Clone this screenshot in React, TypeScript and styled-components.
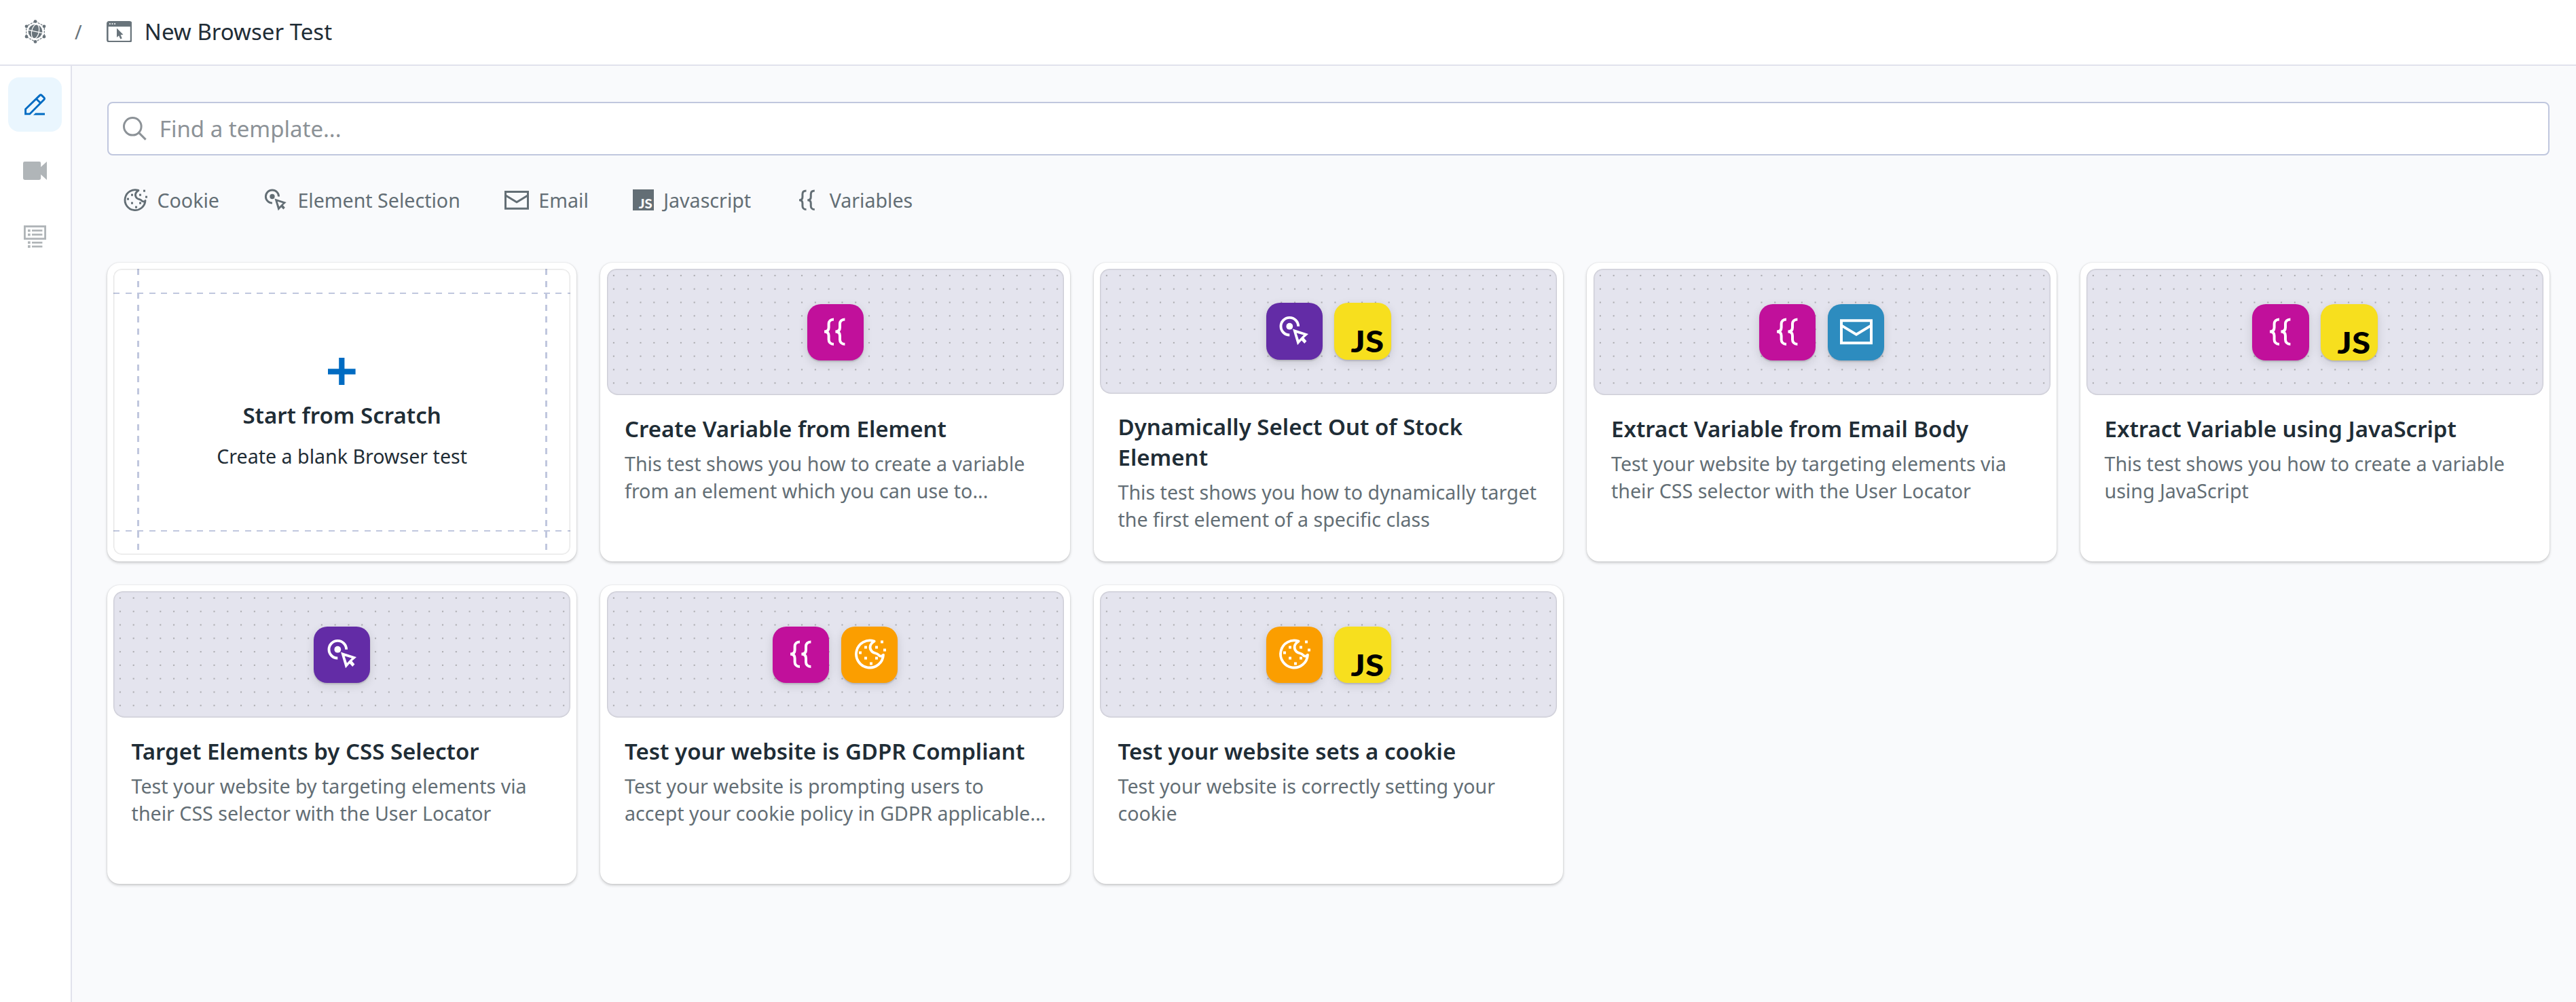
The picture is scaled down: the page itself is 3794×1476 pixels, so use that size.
import React from "react";
import styled, { createGlobalStyle, css } from "styled-components";

const GlobalStyle = createGlobalStyle`
  *, *::before, *::after { box-sizing: border-box; }
  html, body { margin: 0; padding: 0; }
  body {
    background: #f9fafc;
    color: #1f2d36;
    font-family: "Noto Sans", "Open Sans", sans-serif;
    font-size: 28.6px;
    line-height: 39.6px;
  }
  svg { display: block; flex: none; }
`;

/* ---------- shell ---------- */

const Page = styled.div`
  display: flex;
  flex-direction: column;
  min-height: 1476px;
`;

const Header = styled.header`
  display: flex;
  align-items: center;
  height: 97px;
  padding: 0 0 2px 36px;
  background: #fff;
  border-bottom: 2px solid #e1e2ec;
  color: #69747b;
`;

const Slash = styled.span`
  margin: 0 36px 0 42px;
  color: #69747b;
`;

const HeaderTitle = styled.h1`
  margin: 0 0 0 18.8px;
  font-size: 33px;
  font-weight: 400;
  line-height: 44px;
  color: #1f2d36;
`;

const Body = styled.div`
  display: flex;
  flex: 1;
`;

const Sidebar = styled.nav`
  display: flex;
  flex-direction: column;
  gap: 17px;
  width: 106px;
  padding: 17px 0 0 12px;
  background: #fff;
  border-right: 2px solid #e1e2ec;
`;

const SideButton = styled.button<{ $active?: boolean }>`
  display: flex;
  align-items: center;
  justify-content: center;
  width: 79px;
  height: 80px;
  padding: 0;
  border: 0;
  border-radius: 16px;
  background: ${(p) => (p.$active ? "#eaf6fe" : "transparent")};
  color: ${(p) => (p.$active ? "#006bc2" : "#b0b5b8")};
`;

const Main = styled.main`
  flex: 1;
  padding: 53px 38.8px 0 52px;
`;

/* ---------- search and filters ---------- */

const SearchBox = styled.label`
  display: flex;
  align-items: center;
  gap: 18.8px;
  height: 79px;
  padding: 0 21px;
  background: #fff;
  border: 2px solid #c0c7de;
  border-radius: 8px;
  color: #8c9297;
`;

const SearchInput = styled.input`
  flex: 1;
  min-width: 0;
  padding: 0;
  border: 0;
  outline: 0;
  background: transparent;
  font-family: inherit;
  font-size: 33px;
  line-height: 44px;
  color: #1f2d36;
  &::placeholder { color: #8c9297; opacity: 1; }
`;

const Filters = styled.div`
  display: flex;
  align-items: center;
  gap: 65.3px;
  height: 36px;
  margin: 48px 0 73.8px;
  padding-left: 23.3px;
`;

const Filter = styled.button`
  display: flex;
  align-items: center;
  gap: 14.2px;
  padding: 0;
  border: 0;
  background: transparent;
  font: inherit;
  color: #636e75;
`;

/* ---------- cards ---------- */

const Grid = styled.div`
  display: grid;
  grid-template-columns: repeat(5, minmax(0, 1fr));
  grid-auto-rows: 439.8px;
  gap: 35.2px;
`;

const cardFrame = css`
  padding: 9.2px;
  background: #fff;
  border-radius: 18px;
  box-shadow: 0 2px 4px rgba(0, 0, 0, 0.2), 0 0 2px rgba(0, 0, 0, 0.12);
`;

const Card = styled.article`
  ${cardFrame}
  display: flex;
  flex-direction: column;
`;

const Preview = styled.div`
  display: flex;
  flex: 1;
  align-items: center;
  justify-content: center;
  gap: 17.8px;
  border-radius: 14px 14px 16px 16px;
  box-shadow: inset 0 0 2px 1px rgba(0, 0, 0, 0.14);
  background: radial-gradient(circle, #ababaf 0.7px, transparent 1.6px) 0 0 / 19.8px 19.8px #e4e4ee;
`;

const CardBody = styled.div`
  min-height: 235px;
  padding: 27.2px 24px 33px 26.4px;
`;

const CardTitle = styled.h2`
  margin: 0 0 9px;
  font-size: 33px;
  font-weight: 600;
  line-height: 44.6px;
  color: #1f2d36;
  white-space: pre-line;
`;

const CardText = styled.p`
  margin: 0;
  color: #636e75;
  white-space: pre-line;
`;

const Tile = styled.div<{ $color: string }>`
  display: flex;
  align-items: center;
  justify-content: center;
  width: 83.2px;
  height: 83.2px;
  border-radius: 20px;
  background: ${(p) => p.$color};
  color: #fff;
  box-shadow: 0 2px 2px rgba(0, 0, 0, 0.14), 0 4px 14px rgba(0, 0, 0, 0.12);
`;

const ScratchCard = styled.article`
  ${cardFrame}
`;

const dash = "#c0c7de 0 9px, transparent 9px 17.6px";

const ScratchFrame = styled.div`
  display: flex;
  flex-direction: column;
  align-items: center;
  height: 100%;
  padding-top: 130.6px;
  border-radius: 12px;
  box-shadow: inset 0 0 2px 1px rgba(0, 0, 0, 0.14);
  background:
    repeating-linear-gradient(180deg, ${dash}) 35px 0 / 3px 100% no-repeat,
    repeating-linear-gradient(180deg, ${dash}) calc(100% - 34.4px) 0 / 3px 100% no-repeat,
    repeating-linear-gradient(90deg, ${dash}) 0 35px / 100% 2px no-repeat,
    repeating-linear-gradient(90deg, ${dash}) 0 calc(100% - 34px) / 100% 2px no-repeat;
`;

const ScratchTitle = styled.h2`
  margin: 22.5px 0 18px;
  font-size: 33px;
  font-weight: 600;
  line-height: 44.6px;
`;

const ScratchText = styled.p`
  margin: 0;
`;

/* ---------- icons ---------- */

type IconProps = { size?: number };

const CookieIcon = ({ size = 36 }: IconProps) => (
  <svg width={size} height={size} viewBox="0 0 48 48" fill="none" overflow="visible">
    <path
      d="M30.6 4.6A20 20 0 1 0 44 24.6C42 27.6 38.6 27 36.6 24.4C34.6 22 30.6 22.6 27.6 20C23.4 16 22.8 9.4 30.6 4.6Z"
      stroke="currentColor"
      strokeWidth="3.8"
      strokeLinejoin="round"
    />
    {[[18, 13.5], [10, 21.5], [18, 29.5], [34, 13.5], [34, 29.5], [26, 37.5], [42, 5.5], [46, 17.5]].map(([x, y]) => (
      <rect key={`${x}-${y}`} x={x - 2} y={y - 2} width="4" height="4" fill="currentColor" />
    ))}
  </svg>
);

const ElementIcon = ({ size = 36 }: IconProps) => (
  <svg width={size} height={size} viewBox="0 0 48 48" fill="none">
    <path d="M30.1 16.7A12.8 12.8 0 1 0 17.3 29.5" stroke="currentColor" strokeWidth="3.9" />
    <circle cx="17.3" cy="16.7" r="4.9" fill="currentColor" />
    <path
      fillRule="evenodd"
      fill="currentColor"
      d="M22 20.6L45 28L38.4 33.8L42.4 38.4L39.2 42L35 37.6L29 44.2ZM27.6 26.4L31 36.8L38 29.6Z"
    />
  </svg>
);

const EmailIcon = ({ size = 36 }: IconProps) => (
  <svg width={size} height={size} viewBox="0 0 48 48" fill="none" stroke="currentColor" strokeWidth="4">
    <path d="M2 7.2H46V40.2H2Z" />
    <path d="M2 14.4L24 27.7L46 14.4" />
  </svg>
);

const VariablesIcon = ({ size = 36 }: IconProps) => (
  <svg width={size} height={size} viewBox="0 0 48 48" fill="none" stroke="currentColor" strokeWidth="4">
    <path d="M22 5.4C17 5.4 14.6 8.4 14.6 12V17.5C14.6 21 13 23.6 8 23.6C13 23.6 14.6 26.2 14.6 29.7V35.2C14.6 38.8 17 42 22 42" />
    <path d="M38.4 5.4C33.4 5.4 31 8.4 31 12V17.5C31 21 29.4 23.6 24.4 23.6C29.4 23.6 31 26.2 31 29.7V35.2C31 38.8 33.4 42 38.4 42" />
  </svg>
);

const JsBadgeIcon = () => (
  <svg width="31" height="36" viewBox="0 0 31 36">
    <rect x="0" y="2" width="31" height="31" fill="currentColor" />
    <text x="8.8" y="30" fontFamily="Lato, sans-serif" fontWeight="900" fontSize="19.5" textLength="20" lengthAdjust="spacingAndGlyphs" fill="#f9fafc">
      JS
    </text>
  </svg>
);

const JsTileIcon = () => (
  <svg width="83.2" height="83.2" viewBox="0 0 83.2 83.2">
    <text x="24.6" y="73.4" fontFamily="Lato, sans-serif" fontWeight="900" fontSize="44" textLength="48.5" lengthAdjust="spacingAndGlyphs" fill="#000">
      JS
    </text>
  </svg>
);

const GlobeIcon = () => (
  <svg width="32" height="35" viewBox="0 0 32 35" fill="none">
    <path d="M16 2.4L29.3 9.6V25.2L16 32.4L2.7 25.2V9.6Z" stroke="currentColor" strokeWidth="1.2" strokeDasharray="3 1.4" />
    {[[16, 2.6], [29, 9.8], [29, 25], [16, 32.4], [3, 25], [3, 9.8]].map(([x, y]) => (
      <circle key={`${x}-${y}`} cx={x} cy={y} r="2.4" fill="currentColor" />
    ))}
    <circle cx="16" cy="17.4" r="12" fill="#fff" />
    <circle cx="16" cy="17.4" r="10.4" fill="currentColor" />
    <g stroke="#fff" strokeWidth="1.2" transform="rotate(12 16 17.4)">
      <ellipse cx="16" cy="17.4" rx="5.4" ry="10.6" />
      <path d="M5.4 17.4H26.6" />
    </g>
  </svg>
);

const BrowserIcon = () => (
  <svg width="37.4" height="31.6" viewBox="0 0 37.4 31.6" fill="none">
    <rect x="1.3" y="1.3" width="34.8" height="29" rx="2.2" stroke="currentColor" strokeWidth="2.6" />
    <path d="M1 2H36.4V8.3H1Z" fill="currentColor" />
    <path d="M4 3.2h1.8v1.8H4ZM7.6 3.2h1.8v1.8H7.6ZM11.2 3.2h1.8v1.8h-1.8Z" fill="#fff" />
    <path d="M15 10.6V24L18.1 21.4L20.3 26.6L22.8 25.5L20.6 20.4L24.5 20Z" fill="currentColor" />
  </svg>
);

const PencilIcon = () => (
  <svg width="32" height="32" viewBox="0 0 32 32" fill="none" stroke="currentColor" strokeWidth="2.9">
    <path d="M1.6 29.9V22.8L22.4 2.6Q24 1.1 25.6 2.6L28.8 5.8Q30.2 7.3 28.8 8.8L7.8 29.9Z" />
    <path d="M17 7.2L24 14" />
    <path d="M13 31.4L16.2 28.4H30V31.4Z" fill="currentColor" stroke="none" />
  </svg>
);

const VideoIcon = () => (
  <svg width="35" height="27" viewBox="0 0 35 27" fill="currentColor">
    <rect width="26.2" height="27" rx="2.4" />
    <path d="M25 9L35 0V27L25 18Z" />
  </svg>
);

const ListIcon = () => (
  <svg width="33" height="33" viewBox="0 0 33 33" fill="none">
    <rect x="1.4" y="1.5" width="30.2" height="18.2" stroke="currentColor" strokeWidth="2.9" />
    {[7.7, 13.7, 25.3, 31.1].map((y) => (
      <path key={y} d={`M6 ${y - 1.8}h3.7v3.6h-3.7ZM12 ${y - 1.4}h15.4v2.8h-15.4Z`} fill="currentColor" />
    ))}
  </svg>
);

const SearchIcon = () => (
  <svg width="35" height="35" viewBox="0 0 35 35" fill="none" stroke="currentColor" strokeWidth="3">
    <circle cx="14.3" cy="14.3" r="12.8" />
    <path d="M23.4 23.4L33.6 33.6" />
  </svg>
);

const PlusIcon = () => (
  <svg width="40.6" height="40.6" viewBox="0 0 40.6 40.6" fill="#006bc2">
    <path d="M16.2 0h8.2v40.6h-8.2ZM0 16.2h40.6v8.2H0Z" />
  </svg>
);

/* ---------- data ---------- */

type Kind = "variables" | "element" | "email" | "js" | "cookie";

const tiles: Record<Kind, { color: string; icon: React.ReactNode }> = {
  variables: { color: "#c1109b", icon: <VariablesIcon size={48} /> },
  element: { color: "#632ca6", icon: <ElementIcon size={48} /> },
  email: { color: "#2d8cbf", icon: <EmailIcon size={48} /> },
  js: { color: "#f7df1e", icon: <JsTileIcon /> },
  cookie: { color: "#fb9e00", icon: <CookieIcon size={48} /> },
};

const filters = [
  { label: "Cookie", icon: <CookieIcon /> },
  { label: "Element Selection", icon: <ElementIcon /> },
  { label: "Email", icon: <EmailIcon /> },
  { label: "Javascript", icon: <JsBadgeIcon /> },
  { label: "Variables", icon: <VariablesIcon /> },
];

const templates: { kinds: Kind[]; title: string; text: string }[] = [
  {
    kinds: ["variables"],
    title: "Create Variable from Element",
    text: "This test shows you how to create a variable\nfrom an element which you can use to...",
  },
  {
    kinds: ["element", "js"],
    title: "Dynamically Select Out of Stock\nElement",
    text: "This test shows you how to dynamically target\nthe first element of a specific class",
  },
  {
    kinds: ["variables", "email"],
    title: "Extract Variable from Email Body",
    text: "Test your website by targeting elements via\ntheir CSS selector with the User Locator",
  },
  {
    kinds: ["variables", "js"],
    title: "Extract Variable using JavaScript",
    text: "This test shows you how to create a variable\nusing JavaScript",
  },
  {
    kinds: ["element"],
    title: "Target Elements by CSS Selector",
    text: "Test your website by targeting elements via\ntheir CSS selector with the User Locator",
  },
  {
    kinds: ["variables", "cookie"],
    title: "Test your website is GDPR Compliant",
    text: "Test your website is prompting users to\naccept your cookie policy in GDPR applicable...",
  },
  {
    kinds: ["cookie", "js"],
    title: "Test your website sets a cookie",
    text: "Test your website is correctly setting your\ncookie",
  },
];

export default function App() {
  return (
    <Page>
      <GlobalStyle />
      <Header>
        <GlobeIcon />
        <Slash>/</Slash>
        <BrowserIcon />
        <HeaderTitle>New Browser Test</HeaderTitle>
      </Header>
      <Body>
        <Sidebar>
          <SideButton $active><PencilIcon /></SideButton>
          <SideButton><VideoIcon /></SideButton>
          <SideButton><ListIcon /></SideButton>
        </Sidebar>
        <Main>
          <SearchBox>
            <SearchIcon />
            <SearchInput placeholder="Find a template..." />
          </SearchBox>
          <Filters>
            {filters.map((f) => (
              <Filter key={f.label}>
                {f.icon}
                {f.label}
              </Filter>
            ))}
          </Filters>
          <Grid>
            <ScratchCard>
              <ScratchFrame>
                <PlusIcon />
                <ScratchTitle>Start from Scratch</ScratchTitle>
                <ScratchText>Create a blank Browser test</ScratchText>
              </ScratchFrame>
            </ScratchCard>
            {templates.map((t) => (
              <Card key={t.title}>
                <Preview>
                  {t.kinds.map((k) => (
                    <Tile key={k} $color={tiles[k].color}>{tiles[k].icon}</Tile>
                  ))}
                </Preview>
                <CardBody>
                  <CardTitle>{t.title}</CardTitle>
                  <CardText>{t.text}</CardText>
                </CardBody>
              </Card>
            ))}
          </Grid>
        </Main>
      </Body>
    </Page>
  );
}
